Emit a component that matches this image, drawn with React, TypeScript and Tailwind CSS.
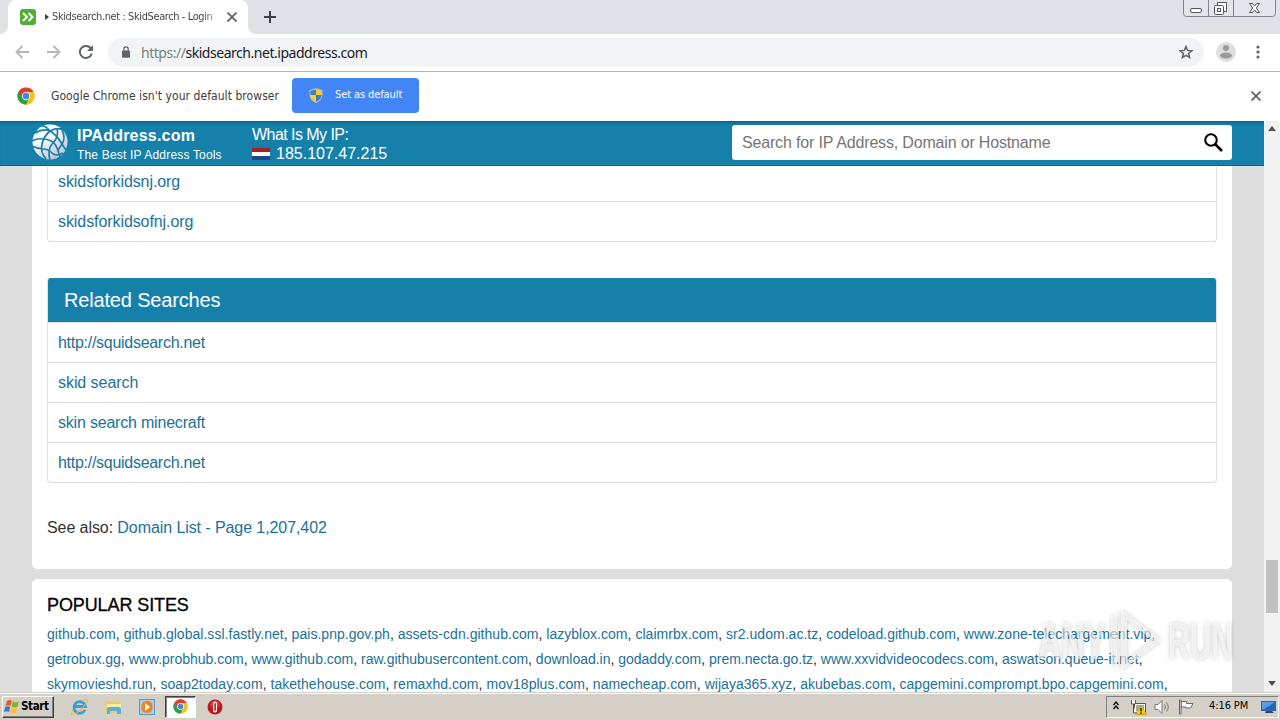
import { Fragment } from 'react';
import type { ReactNode } from 'react';

const relatedSearches = [
  { term: 'http://squidsearch.net', spacing: 'tracking-[-0.28px]' },
  { term: 'skid search', spacing: 'tracking-[-0.06px]' },
  { term: 'skin search minecraft', spacing: 'tracking-[-0.2px]' },
  { term: 'http://squidsearch.net', spacing: 'tracking-[-0.28px]' },
];

const popularSites = [
  {
    spacing: 'tracking-[0.03px]',
    sites: [
      'github.com', 'github.global.ssl.fastly.net', 'pais.pnp.gov.ph', 'assets-cdn.github.com', 'lazyblox.com',
      'claimrbx.com', 'sr2.udom.ac.tz', 'codeload.github.com', 'www.zone-telechargement.vip',
    ],
  },
  {
    spacing: 'tracking-[-0.01px]',
    sites: [
      'getrobux.gg', 'www.probhub.com', 'www.github.com', 'raw.githubusercontent.com', 'download.in',
      'godaddy.com', 'prem.necta.go.tz', 'www.xxvidvideocodecs.com', 'aswatson.queue-it.net',
    ],
  },
  {
    spacing: 'tracking-[0.035px]',
    sites: [
      'skymovieshd.run', 'soap2today.com', 'takethehouse.com', 'remaxhd.com', 'mov18plus.com',
      'namecheap.com', 'wijaya365.xyz', 'akubebas.com', 'capgemini.comprompt.bpo.capgemini.com',
    ],
  },
];

function ChromeLogo({ size }: { size: number }) {
  return (
    <svg width={size} height={size} viewBox="0 0 48 48">
      <circle cx="24" cy="24" r="23" fill="#fbc116" />
      <path d="M4.1 12.5A23 23 0 0 0 24 47L33.5 29.5 24 24Z" fill="#2a9f4a" />
      <path d="M24 13H44A23 23 0 0 1 24 47L33.5 29.5Z" fill="#fbc116" />
      <path d="M4.1 12.5A23 23 0 0 1 43.9 12.5V13H24L14.5 29.5Z" fill="#e33b2e" />
      <circle cx="24" cy="24" r="11" fill="#fff" />
      <circle cx="24" cy="24" r="8.8" fill="#4285f4" />
    </svg>
  );
}

function CloseIcon({ className }: { className: string }) {
  return (
    <svg className={className} width="10" height="10" viewBox="0 0 10 10">
      <path d="M.5.5l9 9M9.500.5l-9 9" stroke="#5f6368" strokeWidth="1.800" />
    </svg>
  );
}

function TabStrip() {
  return (
    <div className="flex h-[34px] shrink-0 items-start bg-[#dee1e6]">
      <svg className="mt-[26px]" width="8" height="8">
        <path d="M8 0V8H0A8 8 0 0 0 8 0" fill="#fff" />
      </svg>
      <div className="flex h-[34px] w-60 items-center rounded-t-lg bg-white">
        <svg className="ml-3 shrink-0" width="16" height="16" viewBox="0 0 16 16">
          <rect width="16" height="16" rx="3" fill="#4fae35" />
          <path d="m3 4 4 4-4 4M8.500 4l4 4-4 4" fill="none" stroke="#fff" strokeWidth="2" />
        </svg>
        <svg className="ml-2 shrink-0" width="6" height="8">
          <path d="M1 1v6L5 4Z" fill="#3c4043" />
        </svg>
        <div className="ml-[2px] w-[167px] bg-gradient-to-r from-[#3c4043] from-90% to-[#3c4043]/30 bg-clip-text font-['DejaVu_Sans_Condensed','DejaVu_Sans',sans-serif] text-[11px] tracking-[-0.4px] whitespace-nowrap text-transparent">
          Skidsearch.net : SkidSearch - Login
        </div>
        <CloseIcon className="ml-2 shrink-0" />
      </div>
      <svg className="mt-[26px]" width="8" height="8">
        <path d="M0 0V8H8A8 8 0 0 1 0 0" fill="#fff" />
      </svg>
      <svg className="mt-[11px] ml-2" width="12" height="12">
        <path d="M6 0V12M0 6H12" stroke="#3c4043" strokeWidth="2" />
      </svg>
      <svg className="mr-1 ml-auto" width="93" height="17" fill="none" stroke="#50555e">
        <path d="M.5 0v13.500q0 3 3 3h86q3 0 3-3V0M25.500 0v16M50.500 0v16" fill="#e2e5e9" stroke="#7e848e" />
        <rect x="7.500" y="8.500" width="11" height="4" rx="1.500" fill="#fff" />
        <path d="M34.500 2.500h9v9h-9z" fill="#fff" />
        <rect x="31.500" y="5.500" width="9" height="9" rx="1" fill="#fff" />
        <rect x="34.500" y="8.500" width="3" height="3" />
        <path d="M66.500 3.500h3l2 2.500 2-2.500h3l-3.200 4.500 3.200 4.500h-3l-2-2.500-2 2.500h-3l3.200-4.500Z" fill="#fff" />
      </svg>
    </div>
  );
}

function Toolbar() {
  return (
    <div className="flex h-[38px] shrink-0 items-center border-b border-[#b3b6b6] bg-white pb-px">
      <svg className="ml-[15px]" width="14" height="14" fill="none" stroke="#b4b6b8" strokeWidth="1.800">
        <path d="M14 7H1.500M7.500 1 1.500 7l6 6" />
      </svg>
      <svg className="ml-[18px]" width="14" height="14" fill="none" stroke="#b4b6b8" strokeWidth="1.800">
        <path d="M0 7H12.500M6.500 1l6 6-6 6" />
      </svg>
      <svg className="ml-[18px]" width="14" height="14" viewBox="0 0 14 14">
        <path d="M11.600 3.200A6 6 0 1 0 12.700 8.500" fill="none" stroke="#5f6368" strokeWidth="2" />
        <path d="M14 0v6H8Z" fill="#5f6368" />
      </svg>
      <div className="ml-[15px] flex h-7 w-[1096px] items-center rounded-full bg-[#f1f3f4]">
        <svg className="ml-[14px]" width="8" height="12" viewBox="0 0 8 12">
          <rect y="4.500" width="8" height="7.200" rx="1" fill="#5f6368" />
          <path d="M1.800 5V3a2.200 2.200 0 0 1 4.400 0v2" fill="none" stroke="#5f6368" strokeWidth="1.200" />
        </svg>
        <span className="ml-[11px] font-['Noto_Sans',sans-serif] text-[14px] tracking-[-0.47px] text-[#202124]">
          <span className="text-[#7b7f83]">https://</span>skidsearch.net.ipaddress.com
        </span>
        <svg className="mr-[11px] ml-auto" width="14" height="14" viewBox="0 0 14 14">
          <path d="m7 1.500 1.600 3.900 4.200.3-3.200 2.700 1 4.100L7 10.300l-3.600 2.200 1-4.100L1.200 5.700l4.200-.3Z" fill="none" stroke="#5f6368" strokeWidth="1.500" />
        </svg>
      </div>
      <svg className="ml-3" width="20" height="20">
        <circle cx="10" cy="10" r="10" fill="#dededf" />
        <circle cx="10" cy="6" r="3" fill="#9a9a9b" />
        <ellipse cx="10" cy="13.500" rx="6" ry="3" fill="#9a9a9b" />
      </svg>
      <svg className="ml-[20px]" width="4" height="14" fill="#5f6368">
        <circle cx="2" cy="2" r="1.600" />
        <circle cx="2" cy="7" r="1.600" />
        <circle cx="2" cy="12" r="1.600" />
      </svg>
    </div>
  );
}

function InfoBar() {
  return (
    <div className="flex h-[49px] shrink-0 items-center bg-white pb-[2px] font-['DejaVu_Sans_Condensed','DejaVu_Sans',sans-serif]">
      <div className="ml-[17px]">
        <ChromeLogo size={18} />
      </div>
      <span className="ml-4 w-[230px] text-[12px] tracking-[0.06px] whitespace-nowrap text-[#3c3c3c]">
        Google Chrome isn't your default browser
      </span>
      <button className="ml-[11px] flex h-[35px] w-[127px] items-center rounded-[4px] bg-[#4285f4] text-white">
        <svg className="ml-[17px]" width="14" height="15" viewBox="0 0 14 15">
          <path d="M7 0 13.500 2v5q0 5-6.500 8Q.5 12 .5 7V2Z" fill="#b9bda8" />
          <path d="M7 1.500V7H1.500V3Z" fill="#377fd0" />
          <path d="M7 1.500V7h5.500V3Z" fill="#f6cf2b" />
          <path d="M7 13.700V7H1.500q.2 4.500 5.500 6.700" fill="#f6cf2b" />
          <path d="M7 13.700V7h5.500q-.2 4.500-5.500 6.700" fill="#377fd0" />
        </svg>
        <span className="ml-3 text-[11px] tracking-[-0.1px] whitespace-nowrap">Set as default</span>
      </button>
      <CloseIcon className="mr-[19px] ml-auto" />
    </div>
  );
}

function SiteHeader() {
  return (
    <header className="flex h-[45px] shrink-0 border-b border-[#0f6688] bg-[#1581ab] pl-8 text-white shadow-[inset_0_3px_3px_-1px_#0f6688]">
      <svg className="mt-[3px]" width="36" height="36" viewBox="0 0 36 36">
        <defs>
          <linearGradient id="globe" x1="0" y1="0" x2=".6" y2="1">
            <stop offset=".4" stopColor="#fff" />
            <stop offset="1" stopColor="#bfc5d0" />
          </linearGradient>
        </defs>
        <circle cx="18" cy="18" r="17.500" fill="url(#globe)" />
        <g fill="none" stroke="#1581ab" strokeWidth="1.700">
          <path d="M3 9Q12 4 18 7T30 20 35 24" />
          <path d="M10 2Q14 2 18 7 26 3 31 6" />
          <path d="M18 7Q12 12 10 20T14 35" />
          <path d="M0 17Q5 14 12 15T22 19 28 33" />
          <path d="M25 4Q27 13 21 19T18 36" />
          <path d="M0 22Q6 25 11 25T20 29 31 29" />
          <path d="M30 6Q34 14 30 20T26 27" />
        </g>
      </svg>
      <div className="mt-[5px] ml-[9px] w-[175px] whitespace-nowrap">
        <div className="text-[16px] leading-5 font-bold tracking-[0.22px]">IPAddress.com</div>
        <div className="text-[12px] leading-[19px] tracking-[0.18px]">The Best IP Address Tools</div>
      </div>
      <div className="mt-1 text-[16px] leading-[19px] whitespace-nowrap">
        <div className="tracking-[-0.55px]">What Is My IP:</div>
        <div className="flex items-center">
          <svg className="mr-[6px]" width="18" height="12">
            <rect width="18" height="4" fill="#ae1c28" />
            <rect y="4" width="18" height="4" fill="#fff" />
            <rect y="8" width="18" height="4" fill="#21468b" />
          </svg>
          185.107.47.215
        </div>
      </div>
      <div className="mt-1 mr-8 ml-auto flex h-[35px] w-[500px] items-center rounded-[3px] bg-white px-[10px] text-[16px] tracking-[-0.17px] text-[#757575]">
        Search for IP Address, Domain or Hostname
        <svg className="mr-[-1px] mb-px ml-auto" width="19" height="19" viewBox="0 0 19 19" fill="none" stroke="#000">
          <circle cx="7" cy="7" r="5.800" strokeWidth="2.100" />
          <path d="m11 11 7 7" strokeWidth="2.700" />
        </svg>
      </div>
    </header>
  );
}

function ListRow({ children }: { children: ReactNode }) {
  return <li className="flex h-10 items-center border-t border-[#ddd] px-[10px]">{children}</li>;
}

function Page() {
  return (
    <div className="flex min-h-0 flex-1 overflow-hidden font-['Liberation_Sans',Arial,sans-serif]">
      <div className="flex min-w-0 flex-1 flex-col overflow-hidden bg-[#ddd]">
        <SiteHeader />
        <main className="mx-8 h-[403px] shrink-0 rounded-b-[5px] bg-white px-[15px] text-[16px] tracking-[-0.08px] text-[#1b7196]">
          <ul className="h-[76px] rounded-b-[4px] border border-t-0 border-[#ddd]">
            <li className="flex h-[35px] items-center px-[10px] pb-[3px]">skidsforkidsnj.org</li>
            <ListRow>skidsforkidsofnj.org</ListRow>
          </ul>
          <h2 className="mt-9 flex h-[44px] items-center rounded-t-[3px] border-x border-[#ddd] bg-[#1581ab] bg-clip-padding px-4 text-[20px] tracking-[-0.17px] text-white">
            Related Searches
          </h2>
          <ul className="rounded-b-[4px] border border-t-0 border-[#ddd]">
            {relatedSearches.map(({ term, spacing }, i) => (
              <ListRow key={i}>
                <a className={spacing}>{term}</a>
              </ListRow>
            ))}
          </ul>
          <p className="mt-[33px] leading-6">
            <span className="text-[#333]">See also:</span> Domain List - Page 1,207,402
          </p>
        </main>
        <section className="mx-8 mt-[10px] h-[140px] shrink-0 rounded-t-[5px] bg-white px-[15px] pt-[14px]">
          <h3 className="h-[29px] text-[18px] leading-6 tracking-[-0.1px] text-black [-webkit-text-stroke:0.3px_#000]">
            POPULAR SITES
          </h3>
          <div className="text-[14px] leading-[25px] whitespace-nowrap text-[#222]">
            {popularSites.map(({ sites, spacing }) => (
              <div key={spacing} className={spacing}>
                {sites.map((site) => (
                  <Fragment key={site}>
                    <a className="text-[#1b7196]">{site}</a>,{' '}
                  </Fragment>
                ))}
              </div>
            ))}
          </div>
        </section>
      </div>
      <div className="flex w-4 flex-col items-center bg-[#f1f1f1]">
        <svg className="mt-[5px]" width="8" height="5">
          <path d="M4 0 8 5H0Z" fill="#505050" />
        </svg>
        <div className="mt-[429px] h-[53px] w-3 bg-[#c1c1c1]" />
        <svg className="mt-[68px]" width="8" height="5">
          <path d="M0 0H8L4 5Z" fill="#505050" />
        </svg>
      </div>
    </div>
  );
}

function Watermark() {
  return (
    <svg className="absolute top-[600px] left-[1030px]" width="220" height="80" viewBox="0 0 220 80">
      <g
        className="font-['Liberation_Sans',Arial,sans-serif] text-[52px] font-bold drop-shadow-[0_0_2px_#00000055]"
        fill="#fff"
        fillOpacity="0.6"
      >
        <text x="8" y="59" textLength="68" lengthAdjust="spacingAndGlyphs">ANY</text>
        <text x="138" y="59" textLength="65" lengthAdjust="spacingAndGlyphs">RUN</text>
        <path d="M91 9 132 40 91 71ZM97 20V60L123 40Z" fillRule="evenodd" />
        <path d="M81 17 87 13V67L81 63Z" />
      </g>
    </svg>
  );
}

function Taskbar() {
  return (
    <div className="flex h-7 shrink-0 items-center border-t border-[#d4d0c8] bg-[#d4d0c8] font-['DejaVu_Sans_Condensed','DejaVu_Sans',sans-serif] text-[11px] text-black shadow-[inset_0_1px_0_#fff]">
      <div className="ml-[2px] flex h-[22px] w-[52px] items-center border border-t-white border-r-[#404040] border-b-[#404040] border-l-white font-bold shadow-[inset_-1px_-1px_0_#808080]">
        <svg className="mb-px ml-[1px]" width="16" height="15" viewBox="0 0 16 15">
          <path d="M3 2q3-2 5 0L6.500 7q-3-1.500-5 0Z" fill="#e85c23" />
          <path d="M9 2.500q3 1.500 6 0L13.500 8q-3 1-6-.5Z" fill="#7db531" />
          <path d="M1.200 8q3-1.500 5 0L5 13q-2.500-1.500-5 0Z" fill="#3978c8" />
          <path d="M7.200 8.500q3 1.500 6 .5L12 14q-3 1-6-.7Z" fill="#f8bf26" />
        </svg>
        <span className="ml-px text-[11.500px] tracking-[-0.35px]">Start</span>
      </div>
      <svg className="ml-[16px]" width="19" height="18" viewBox="0 0 19 18" fill="none">
        <path d="M15 12a5.800 5.800 0 1 1 .5-3.500H5" stroke="#369bdc" strokeWidth="2.800" />
        <path d="M3.500 12Q-1 18 3 16.500 10 14 15 7q4-6 1.500-5.500-2 0-5 1.500" stroke="#e8bc37" strokeWidth="1.200" />
      </svg>
      <svg className="ml-4" width="17" height="16" viewBox="0 0 17 16">
        <path d="M1 2h5l1 1h8v11H1Z" fill="#eccb62" />
        <path d="M2 5h14v6H2Z" fill="#faeaa2" />
        <path d="M4 8h10q2 0 2 3v4h-4v-3H5v3H2v-4q0-3 2-3" fill="#57b1dc" />
      </svg>
      <svg className="ml-[17px]" width="16" height="16">
        <rect x=".5" y=".5" width="15" height="15" fill="#a4cdee" stroke="#5b9acb" />
        <rect x="2.500" y="2" width="11" height="12" rx="5" fill="#ef8518" />
        <path d="m6 4 5 4-5 4Z" fill="#fff" />
      </svg>
      <div className="ml-[10px] flex h-[22px] w-[31px] items-center justify-center border border-t-[#404040] border-r-white border-b-white border-l-[#404040] bg-white shadow-[inset_1px_1px_0_#808080]">
        <ChromeLogo size={15} />
      </div>
      <svg className="ml-[11px]" width="16" height="16">
        <circle cx="8" cy="8" r="7.500" fill="#bd151c" />
        <ellipse cx="8" cy="5.500" rx="5" ry="4" fill="#e2555a" opacity=".5" />
        <rect x="6" y="2.500" width="4" height="11" rx="2" fill="#fff" />
        <rect x="7.300" y="4" width="1.500" height="8" rx=".7" fill="#a00b12" />
      </svg>
      <div className="mr-[1px] ml-auto flex h-[22px] w-[173px] items-center border border-t-[#808080] border-r-white border-b-white border-l-[#808080]">
        <svg className="mb-[3px] ml-[6px]" width="6" height="9" fill="none" stroke="#000" strokeWidth="1.300">
          <path d="m.5 4 2.500-3 2.500 3M.5 8 3 5l2.500 3" />
        </svg>
        <svg className="ml-[11px]" width="17" height="16" viewBox="0 0 17 16">
          <path d="M4.500 4.500h11v9h-11z" fill="#fff" stroke="#555" />
          <path d="M6 6h8v6H6z" fill="#a9a9a9" />
          <path d="M1.500 1v4h4V1M3.500 5v9h2" fill="#fff" stroke="#555" />
          <path d="m11 6 5.500 9.500h-11Z" fill="#f4d013" stroke="#b29008" strokeWidth=".7" />
          <path d="M11 9v3.500M11 13.500V15" stroke="#000" strokeWidth="1.300" />
        </svg>
        <svg className="ml-[7px]" width="17" height="16" viewBox="0 0 17 16" fill="none" stroke="#777">
          <path d="M1 5.500h3l4-4v13l-4-4H1Z" fill="#fff" />
          <path d="M10.500 5.500q2 2.500 0 5M12.500 3.500q3.500 4.500 0 9" />
        </svg>
        <svg className="ml-[7px]" width="17" height="16" viewBox="0 0 17 16" fill="#fff" stroke="#666">
          <path d="M3 2.500h5.500v2H15L12.500 9H8V8H3Z" />
          <path d="M1.500 1v14h1.500V1Z" />
        </svg>
        <span className="ml-[14px] w-[42px] tracking-[-0.1px] whitespace-nowrap">4:16 PM</span>
        <svg className="ml-[10px]" width="16" height="14">
          <path d="M0 1h15v10H0Z" fill="#2864b8" />
          <path d="M1 2h13L3 9H1Z" fill="#5b9be2" />
          <path d="M5 11h6l2 2H4Z" fill="#32485f" />
        </svg>
      </div>
    </div>
  );
}

export default function App() {
  return (
    <div className="relative flex h-[720px] w-[1280px] flex-col overflow-hidden bg-white">
      <TabStrip />
      <Toolbar />
      <InfoBar />
      <Page />
      <Taskbar />
      <Watermark />
    </div>
  );
}
